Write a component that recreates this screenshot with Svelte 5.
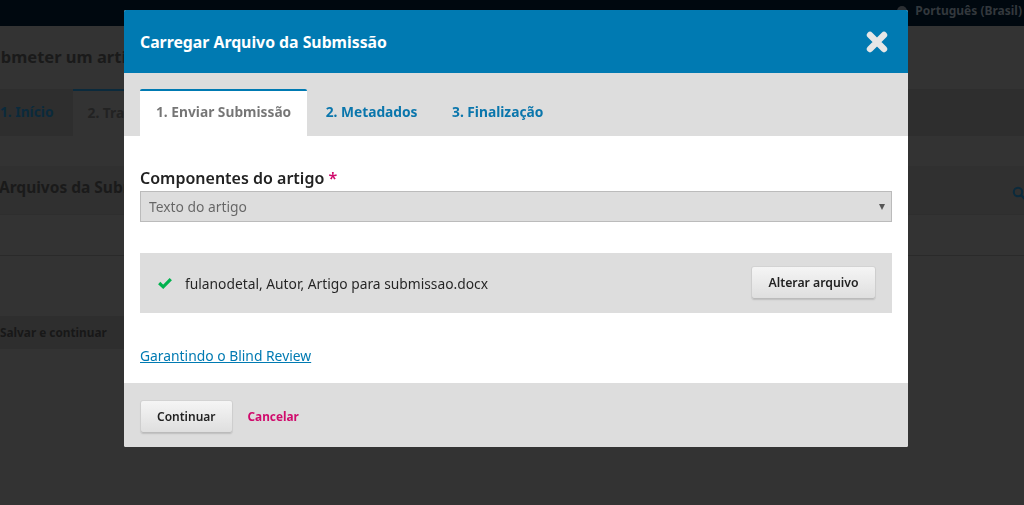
<script lang="ts">
  const tabs = ['1. Enviar Submissão', '2. Metadados', '3. Finalização']
  let activeTab = $state(0)
</script>

<div class="page">
  <header class="topbar">
    <span class="lang">
      <svg class="globe" viewBox="0 0 12 12" width="12" height="12"><circle cx="6" cy="6" r="5" fill="#2b2f33" /></svg>
      Português (Brasil)
    </span>
  </header>
  <main class="content">
    <h1>Submeter um artigo</h1>
    <nav class="steps">
      <span class="step">1. Início</span>
      <span class="step current">2. Transferência do manuscrito</span>
    </nav>
    <section class="panel">
      <div class="panel-head">
        <h2>Arquivos da Submissão</h2>
        <svg class="search" viewBox="0 0 14 14" width="14" height="14">
          <circle cx="6" cy="6" r="4.2" fill="none" stroke="#0b2a3c" stroke-width="2" />
          <path d="M9 9l4 4" stroke="#0b2a3c" stroke-width="2.4" />
        </svg>
      </div>
      <div class="panel-row"></div>
    </section>
    <button type="button" class="save">Salvar e continuar</button>
  </main>
</div>

<div class="overlay">
  <div class="modal" role="dialog" aria-modal="true" aria-label="Carregar Arquivo da Submissão">
    <header class="modal-header">
      <h2>Carregar Arquivo da Submissão</h2>
      <button type="button" class="close-btn" aria-label="Fechar">
        <svg viewBox="0 0 24 24" width="24" height="24">
          <path d="M5 5L19 19M19 5L5 19" stroke="#e6e6e6" stroke-width="6.4" stroke-linecap="round" />
        </svg>
      </button>
    </header>

    <div class="tabs">
      {#each tabs as tab, i}
        <button type="button" class="tab" class:active={activeTab === i} onclick={() => (activeTab = i)}>{tab}</button>
      {/each}
    </div>

    <div class="body">
      <div class="field">
        <span class="label">Componentes do artigo <em>*</em></span>
        <div class="select">
          <span>Texto do artigo</span>
          <i class="caret"></i>
        </div>
      </div>

      <div class="file-row">
        <svg class="check" viewBox="0 0 14 12" width="14" height="12">
          <path d="M1.2 6L5.2 9.8L12.8 2.2" fill="none" stroke="#00b24e" stroke-width="3.2" />
        </svg>
        <span class="file-name">fulanodetal, Autor, Artigo para submissao.docx</span>
        <button type="button" class="btn">Alterar arquivo</button>
      </div>

      <a class="review" href="#blind">Garantindo o Blind Review</a>
    </div>

    <footer class="modal-footer">
      <button type="button" class="btn continue">Continuar</button>
      <button type="button" class="cancel">Cancelar</button>
    </footer>
  </div>
</div>

<style>
  :global(body) {
    margin: 0;
    background: #333;
    font-family: 'Noto Sans', sans-serif;
    overflow: hidden;
  }

  .page {
    height: 505px;
    overflow: hidden;
    background: #333;
    color: #161616;
  }

  .topbar {
    height: 26px;
    background: #00080f;
    display: flex;
    justify-content: flex-end;
    align-items: center;
    padding-right: 2px;
  }

  .lang {
    display: flex;
    align-items: center;
    gap: 7px;
    font-size: 12px;
    font-weight: 700;
    color: #33383d;
    margin-top: -5px;
  }

  .content {
    margin-left: -19px;
  }

  h1 {
    margin: 21px 0 0;
    font-size: 16.5px;
    line-height: 20px;
    font-weight: 700;
    color: #1a1a1a;
  }

  .steps {
    display: flex;
    margin-top: 22px;
    height: 47px;
    background: #2e2e2e;
    font-size: 13.75px;
    font-weight: 700;
  }

  .step {
    padding: 0 19px;
    line-height: 45px;
    color: #0b2a3c;
  }

  .step.current {
    background: #333;
    border-top: 2px solid #0b2a3c;
    line-height: 43px;
    color: #222;
    padding-left: 15px;
    white-space: nowrap;
  }

  .panel {
    margin-top: 30px;
  }

  .panel-head {
    height: 48px;
    background: #303030;
    display: flex;
    align-items: center;
    justify-content: space-between;
    padding: 0 0 0 18px;
    border-bottom: 1px solid #2e2e2e;
  }

  .panel-head h2 {
    margin: -6px 0 0;
    font-size: 15.5px;
    font-weight: 700;
    color: #1a1a1a;
  }

  .search {
    margin: 5px -2px 0 0;
  }

  .panel-row {
    height: 40px;
    border-bottom: 1px solid #2a2a2a;
  }

  .save {
    display: block;
    margin: 60px 0 0 0;
    padding: 0 0 2px 19px;
    height: 33px;
    width: 150px;
    text-align: left;
    border: 0;
    background: #2e2e2e;
    font: 700 11.8px 'Noto Sans', sans-serif;
    color: #181818;
  }

  .overlay {
    position: fixed;
    inset: 0;
  }

  .modal {
    position: absolute;
    left: 124px;
    top: 10px;
    width: 784px;
    height: 437px;
    display: flex;
    flex-direction: column;
    background: #fff;
    border-radius: 2px;
    overflow: hidden;
    color: #222;
  }

  .modal-header {
    height: 63px;
    flex-shrink: 0;
    background: #007ab2;
    display: flex;
    align-items: center;
    justify-content: space-between;
    padding: 0 19px 0 16px;
  }

  .modal-header h2 {
    margin: 0;
    font-size: 15.8px;
    font-weight: 700;
    color: #fff;
  }

  .close-btn {
    padding: 0;
    border: 0;
    background: transparent;
    height: 24px;
    cursor: pointer;
  }

  .tabs {
    height: 63px;
    flex-shrink: 0;
    box-sizing: border-box;
    background: #ddd;
    padding: 16px 0 0 16px;
    display: flex;
    align-items: stretch;
  }

  .tab {
    padding: 0 16px 5px;
    margin-right: 2.5px;
    border: 0;
    border-top: 2px solid transparent;
    border-radius: 2px 2px 0 0;
    background: transparent;
    font: 700 13.75px 'Noto Sans', sans-serif;
    color: #0a76ac;
    cursor: pointer;
  }

  .tab.active {
    background: #fff;
    border-top-color: #007ab2;
    color: rgba(0, 0, 0, 0.54);
  }

  .body {
    flex: 1;
    padding: 31px 16px 0;
    display: flex;
    flex-direction: column;
    align-items: stretch;
  }

  .label {
    display: block;
    font-size: 16px;
    line-height: 23px;
    margin-bottom: 1px;
    font-weight: 600;
    color: #222;
  }

  .label em {
    font-style: normal;
    color: #d00a6c;
  }

  .select {
    box-sizing: border-box;
    height: 31px;
    display: flex;
    align-items: center;
    justify-content: space-between;
    padding: 0 6px 0 8px;
    background: #ddd;
    border: 1px solid #bbb;
    font-size: 13.85px;
    color: rgba(0, 0, 0, 0.54);
  }

  .caret {
    width: 0;
    height: 0;
    margin-top: 1px;
    border-left: 3.5px solid transparent;
    border-right: 3.5px solid transparent;
    border-top: 6px solid #555;
  }

  .file-row {
    margin-top: 31px;
    height: 60px;
    display: flex;
    align-items: center;
    background: #ddd;
    padding: 0 17px 0 18px;
  }

  .check {
    flex-shrink: 0;
    margin-right: 13px;
  }

  .file-name {
    flex: 1;
    font-size: 13.8px;
    color: rgba(0, 0, 0, 0.84);
  }

  .btn {
    height: 32px;
    padding: 0 16.5px 1px;
    border: 0;
    border-radius: 2px;
    background: linear-gradient(#f5f5f5, #dedede);
    background-color: #eee;
    box-shadow: inset 0 -1px 0 #bbb, 0 0 0 1px rgba(0, 0, 0, 0.04), 0 1px 2px rgba(0, 0, 0, 0.1);
    font: 600 12.25px 'Noto Sans', sans-serif;
    color: #222;
    cursor: pointer;
  }

  .btn.continue {
    padding: 0 16px 1px;
    font-size: 12px;
  }

  .review {
    margin-top: 33px;
    font-size: 13.85px;
    line-height: 20px;
    color: #007ab2;
  }

  .modal-footer {
    height: 64px;
    flex-shrink: 0;
    box-sizing: border-box;
    background: #ddd;
    padding: 4px 16px 0 17px;
    display: flex;
    align-items: center;
    gap: 16px;
  }

  .cancel {
    padding: 0 0 2px;
    border: 0;
    background: transparent;
    font: 700 11.8px 'Noto Sans', sans-serif;
    color: #d00a6c;
    cursor: pointer;
  }
</style>
